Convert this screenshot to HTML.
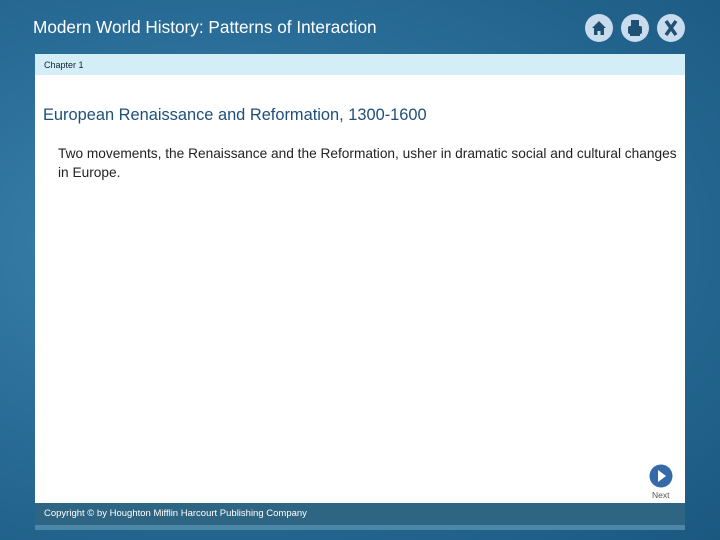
<!DOCTYPE html>
<html><head><style>
body{margin:0;width:720px;height:540px;overflow:hidden;font-family:"Liberation Sans",sans-serif;
background:radial-gradient(ellipse at 30% 45%,#3f86b0 0%,#2b6f9a 45%,#1a5880 100%);position:relative}
.t{position:absolute;left:33px;top:17px;color:#fff;font-size:17.2px;letter-spacing:0px}
.ic{position:absolute;top:14px;width:28px;height:28px;border-radius:50%;background:#c8dcee}
.chap{position:absolute;left:35px;top:54px;width:650px;height:21px;background:#d4eef8;font-size:9px;color:#123;}
.chap span{position:absolute;left:9px;top:6px}
.main{position:absolute;left:35px;top:75px;width:650px;height:428px;background:#fff}
.h{position:absolute;left:8px;top:31px;font-size:16.4px;color:#1e4f7a}
.p{position:absolute;left:23px;top:69px;width:622px;font-size:13.7px;line-height:19px;color:#222}
.ft{position:absolute;left:35px;top:503px;width:650px;height:22px;background:#2e6582;color:#fff;font-size:9.5px}
.ft span{position:absolute;left:9px;top:5px}
.fs{position:absolute;left:35px;top:525px;width:650px;height:5px;background:#4d87a8}
</style></head><body>
<div class="t">Modern World History: Patterns of Interaction</div>
<div class="ic" style="left:585px"><svg width="28" height="28"><path d="M7 14 L14 7 L21 14 L19 14 L19 21 L15.5 21 L15.5 17 L12.5 17 L12.5 21 L9 21 L9 14Z" fill="#1f4f73"/></svg></div>
<div class="ic" style="left:621px"><svg width="28" height="28"><rect x="10" y="6" width="8" height="6" fill="#1f4f73"/><rect x="7" y="12" width="14" height="8" rx="2" fill="#1f4f73"/><rect x="9" y="18" width="10" height="4" fill="#1f4f73"/></svg></div>
<div class="ic" style="left:657px"><svg width="28" height="28"><path d="M9 7 L19 21 M19 7 L9 21" stroke="#1f4f73" stroke-width="3.5"/></svg></div>
<div class="chap"><span>Chapter 1</span></div>
<div class="main">
<div class="h">European Renaissance and Reformation, 1300-1600</div>
<div class="p">Two movements, the Renaissance and the Reformation, usher in dramatic social and cultural changes in Europe.</div>
<svg style="position:absolute;left:614px;top:389px" width="24" height="24"><circle cx="12" cy="12" r="11.5" fill="#3569a8"/><path d="M9 6 L17 12 L9 18Z" fill="#fff"/></svg>
<div style="position:absolute;left:617px;top:415px;font-size:8.5px;color:#555">Next</div>
</div>
<div class="ft"><span>Copyright © by Houghton Mifflin Harcourt Publishing Company</span></div>
<div class="fs"></div>
</body></html>
